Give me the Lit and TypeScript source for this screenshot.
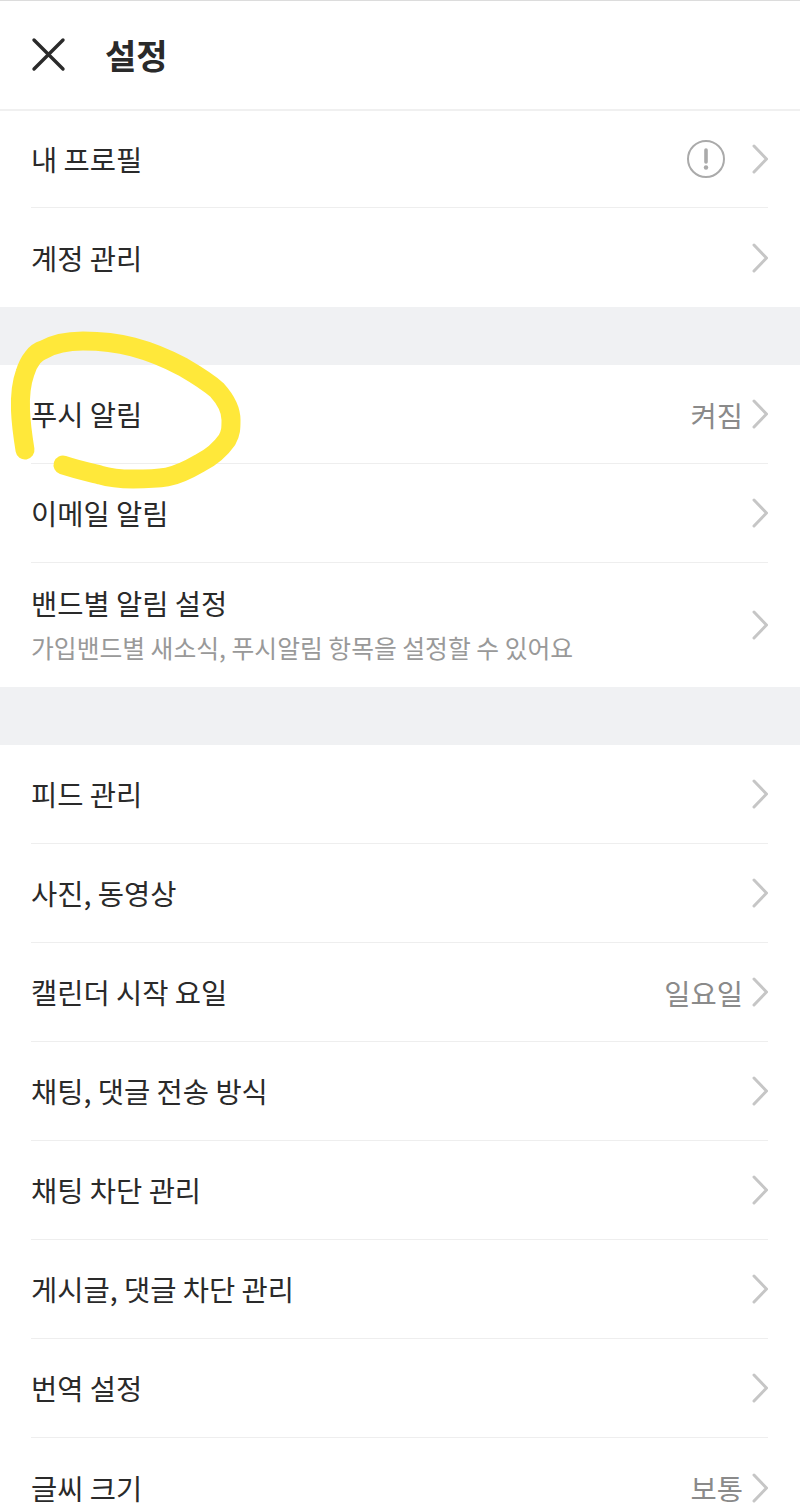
import { LitElement, html, css, svg } from 'lit';
import { customElement } from 'lit/decorators.js';

type Row = { label: string; sub?: string; value?: string; alert?: boolean };

const groups: Row[][] = [
  [{ label: '내 프로필', alert: true }, { label: '계정 관리' }],
  [
    { label: '푸시 알림', value: '켜짐' },
    { label: '이메일 알림' },
    { label: '밴드별 알림 설정', sub: '가입밴드별 새소식, 푸시알림 항목을 설정할 수 있어요' },
  ],
  [
    { label: '피드 관리' },
    { label: '사진, 동영상' },
    { label: '캘린더 시작 요일', value: '일요일' },
    { label: '채팅, 댓글 전송 방식' },
    { label: '채팅 차단 관리' },
    { label: '게시글, 댓글 차단 관리' },
    { label: '번역 설정' },
    { label: '글씨 크기', value: '보통' },
  ],
];

const chevron = html`<svg class="chevron" width="16" height="30" viewBox="0 0 16 30">
  <path d="M2 2 L14.5 15 L2 28" fill="none" stroke="#c6c6c6" stroke-width="3" stroke-linecap="round" stroke-linejoin="round" />
</svg>`;

const alertIcon = html`<svg class="alert" width="40" height="40" viewBox="0 0 40 40">
  <circle cx="20" cy="20" r="18" fill="none" stroke="#aaa" stroke-width="2" />
  <path d="M20 11 V23" stroke="#aaa" stroke-width="3.6" stroke-linecap="round" />
  <circle cx="20" cy="28.5" r="2.2" fill="#aaa" />
</svg>`;

@customElement('app-root')
export class AppRoot extends LitElement {
  static styles = css`
    :host {
      display: block;
      position: relative;
      width: 800px;
      height: 1505px;
      overflow: hidden;
      background: #fff;
      color: #2a2a2a;
      font-family: 'Noto Sans CJK KR', 'Noto Sans', sans-serif;
    }
    .header {
      display: flex;
      align-items: center;
      height: 111px;
      box-sizing: border-box;
      padding-left: 31px;
      border-top: 1px solid #dcdcdc;
      border-bottom: 2px solid #f0f0f0;
    }
    .header svg {
      display: block;
    }
    .title {
      margin-left: 38px;
      font-size: 34px;
      font-weight: 700;
      line-height: 1;
    }
    .group + .group {
      border-top: 58px solid #f0f1f3;
    }
    .row {
      display: flex;
      align-items: center;
      height: 99px;
      box-sizing: border-box;
      margin: 0 32px 0 31px;
      border-bottom: 1px solid #eeeeee;
    }
    .header + .group .row:first-child {
      height: 97px;
    }
    .row.tall {
      height: 124px;
    }
    .group .row:last-child {
      border-bottom: none;
    }
    .text {
      flex: 1;
      min-width: 0;
    }
    .label {
      font-size: 28.5px;
      line-height: 40px;
    }
    .sub {
      font-size: 24.8px;
      line-height: 36px;
      color: #999;
      margin-top: 6px;
      padding-bottom: 2px;
    }
    .value {
      font-size: 28.5px;
      color: #8a8a8a;
      margin-right: 9px;
    }
    .alert {
      display: block;
      margin-right: 26px;
    }
    .chevron {
      display: block;
      flex: none;
    }
    .scribble {
      position: absolute;
      left: 0;
      top: 320px;
      pointer-events: none;
    }
  `;

  renderRow(r: Row) {
    return html`<div class="row ${r.sub ? 'tall' : ''}">
      <div class="text">
        <div class="label">${r.label}</div>
        ${r.sub ? html`<div class="sub">${r.sub}</div>` : ''}
      </div>
      ${r.value ? html`<span class="value">${r.value}</span>` : ''}
      ${r.alert ? alertIcon : ''}
      ${chevron}
    </div>`;
  }

  render() {
    return html`
      <div class="header">
        <svg width="36" height="36" viewBox="0 0 36 36">
          <path d="M3 3 L32 32 M32 3 L3 32" stroke="#2a2a2a" stroke-width="3.4" stroke-linecap="round" />
        </svg>
        <div class="title">설정</div>
      </div>
      ${groups.map((g) => html`<div class="group">${g.map((r) => this.renderRow(r))}</div>`)}
      <svg class="scribble" width="260" height="180" viewBox="0 320 260 180">
        ${svg`<path d="M25 450 C21 425 17 395 25 373 C29 360 36 352 43 350 C55 343 70 341 83 341 C100 341 118 343 133 347 C152 352 168 359 183 367 C195 374 208 382 217 390 C226 400 231 410 231 420 C231 428 231 433 227 440 C220 450 210 458 200 463 C188 470 178 475 167 477 C155 479 145 479 133 479 C120 479 110 478 100 475 C88 472 75 469 63 465"
          fill="none" stroke="#ffe83a" stroke-width="19" stroke-linecap="round" stroke-linejoin="round" />`}
      </svg>
    `;
  }
}
